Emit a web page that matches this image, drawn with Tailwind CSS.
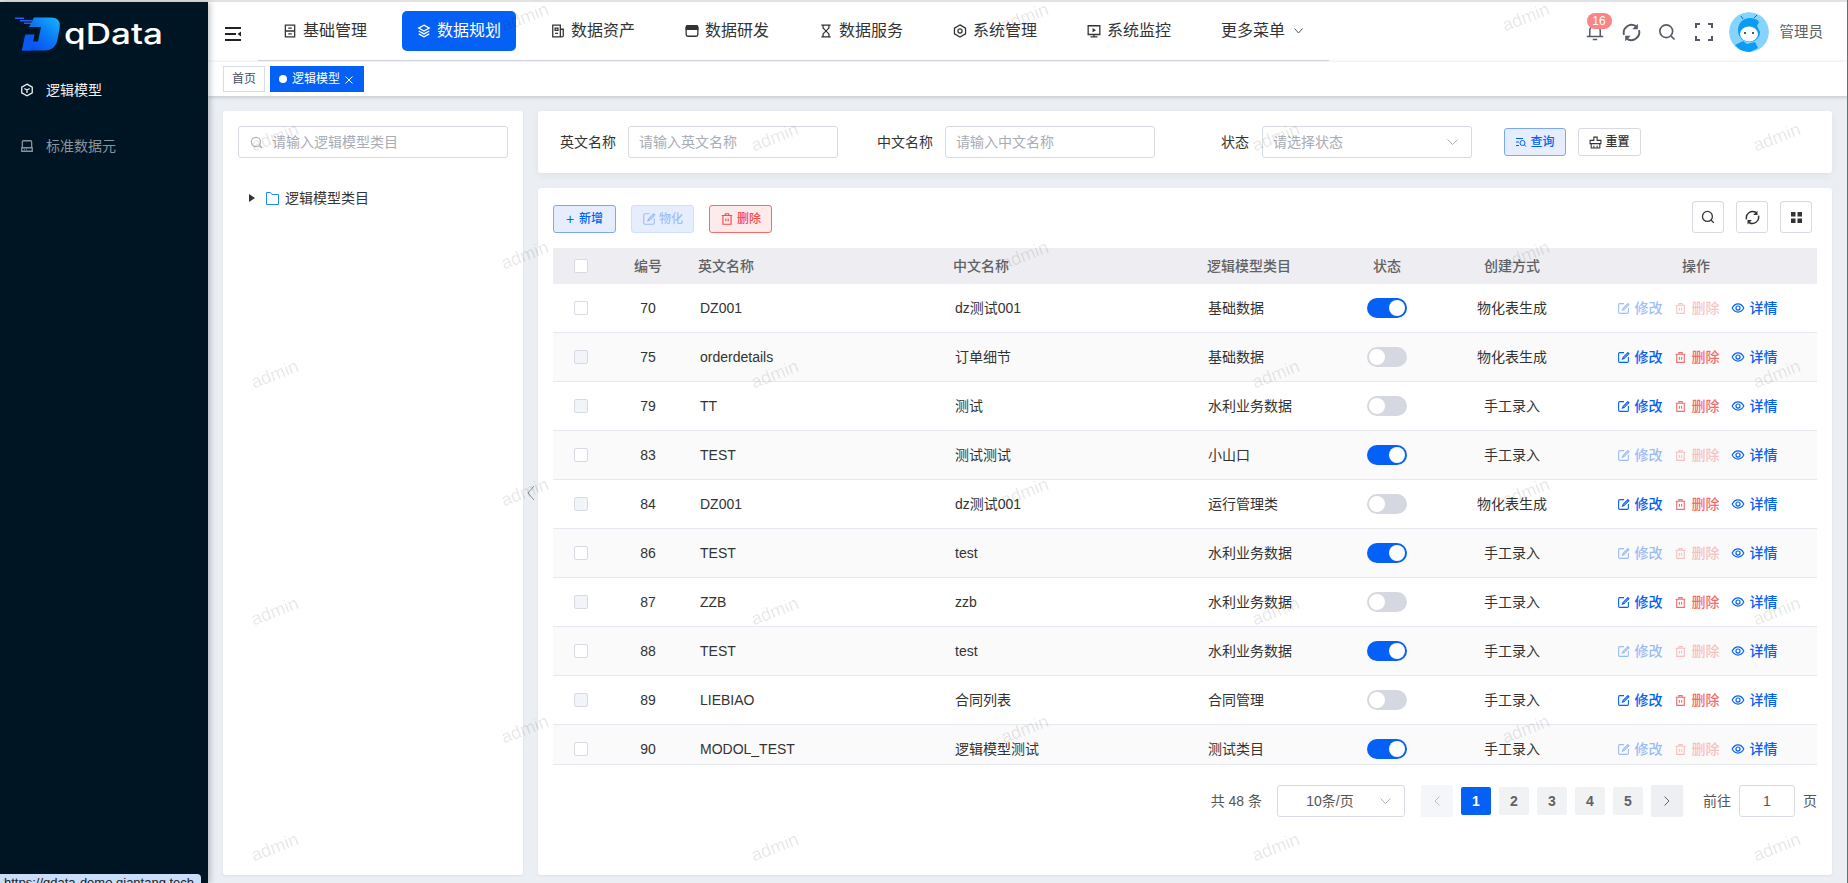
<!DOCTYPE html>
<html lang="zh-CN">

<head>
    <meta charset="UTF-8">
    <title>qData</title>
    <script src="https://cdn.jsdelivr.net/npm/@tailwindcss/browser@4"></script>
</head>

<body class="relative h-[883px] w-[1848px] overflow-hidden bg-[#ebeef2] font-['Liberation_Sans','Noto_Sans_CJK_SC',sans-serif] text-sm text-[#333]">

    <!-- Shared icons -->
    <svg class="hidden" xmlns="http://www.w3.org/2000/svg">
        <symbol id="i-edit" viewBox="0 0 24 24" fill="none" stroke="currentColor" stroke-width="2">
            <path d="M13 3H5a2 2 0 0 0-2 2v14a2 2 0 0 0 2 2h14a2 2 0 0 0 2-2v-8" />
            <path d="M20 3l-9 9-1 3 3-1 9-9z" />
        </symbol>
        <symbol id="i-trash" viewBox="0 0 24 24" fill="none" stroke="currentColor" stroke-width="2">
            <path d="M3 6h18M9 6V3h6v3M5 6v15h14V6M10 11v5M14 11v5" />
        </symbol>
        <symbol id="i-eye" viewBox="0 0 24 24" fill="none" stroke="currentColor" stroke-width="2">
            <path d="M2 12c2.500-4.500 6-7 10-7s7.500 2.500 10 7c-2.500 4.500-6 7-10 7s-7.500-2.500-10-7z" />
            <circle cx="12" cy="12" r="3.500" />
        </symbol>
        <symbol id="i-search" viewBox="0 0 24 24" fill="none" stroke="currentColor" stroke-width="2.200">
            <circle cx="11" cy="11" r="8.500" />
            <path d="M17.500 17.500L22 22" />
        </symbol>
        <symbol id="i-refresh" viewBox="0 0 24 24" fill="none" stroke="currentColor" stroke-width="2.400">
            <path d="M2.500 15a10 10 0 0 1 15-11M21.500 9a10 10 0 0 1-15 11" />
            <path fill="currentColor" stroke="none" d="M20 1v7h-7zM4 23v-7h7z" />
        </symbol>
    </svg>

    <div class="h-[2px] bg-[#e2e2e2]"></div>

    <div class="flex h-[881px]">
        <!-- Sidebar -->
        <aside class="relative z-10 w-[208px] shrink-0 bg-[#001524] shadow-[2px_0_6px_rgba(0,21,41,0.25)]">
            <div class="flex h-[59px] items-start pl-[15px] pt-[15px]">
                <svg class="h-[34px] w-[46px]" viewBox="0 0 46 34" xmlns="http://www.w3.org/2000/svg">
                    <defs>
                        <linearGradient id="logo-d" x1="0" y1="1" x2="1" y2="0">
                            <stop offset="0" stop-color="#0a3ff0" />
                            <stop offset="0.550" stop-color="#0a78f5" />
                            <stop offset="1" stop-color="#17b6ff" />
                        </linearGradient>
                    </defs>
                    <path fill="#2a5cf0" d="M0 0.500h9v1.500H0zM5 3h12v1.500H5zM9 5.500h9v1.500H9z" />
                    <path fill="url(#logo-d)" d="M19 0.500h17c7 0 10 4 8.500 11l-2 11c-1.500 7-5.500 11-13 11H7l3.500-16h9l-1.500 7h5l3-14.500H14z" />
                    <path fill="#0a58f0" d="M10 18.500h9l-3 15H7z" />
                </svg>
                <span class="ml-[3px] mt-[-1px] inline-block origin-left scale-x-[1.21] font-['Inter',sans-serif] text-[29px] font-medium leading-[36px] text-white">qData</span>
            </div>
            <nav>
                <a class="flex h-[58px] items-center gap-[12px] pl-[20px] text-[#f0f2f5]">
                    <svg class="h-[14px] w-[14px]" viewBox="0 0 24 24" fill="none" stroke="currentColor" stroke-width="2.200" xmlns="http://www.w3.org/2000/svg">
                        <path d="M12 2l9 5v10l-9 5-9-5V7zM12 12L7.500 9.500M12 12l4.500-2.500M12 12v5" />
                    </svg>
                    <span>逻辑模型</span>
                </a>
                <a class="flex h-[54px] items-center gap-[12px] pl-[20px] text-[#8a949c]">
                    <svg class="h-[14px] w-[14px]" viewBox="0 0 24 24" fill="none" stroke="currentColor" stroke-width="2.200" xmlns="http://www.w3.org/2000/svg">
                        <path d="M4 15V5a2 2 0 0 1 2-2h12a2 2 0 0 1 2 2v10M3 15h18v6H3zM7 18h1M11 18h1" />
                    </svg>
                    <span>标准数据元</span>
                </a>
            </nav>
        </aside>

        <div class="flex w-[1640px] flex-col">
            <!-- Top menu -->
            <header class="flex h-[60px] shrink-0 bg-white">
                <div class="flex w-[50px] items-center pl-[17px] pt-[4px]">
                    <svg class="h-[14px] w-[16px]" viewBox="0 0 16 14" xmlns="http://www.w3.org/2000/svg">
                        <path fill="#222" d="M0 0h16v2H0zM0 6h11v2H0zM0 12h16v2H0zM16 4.500v5l-3.500-2.500z" />
                    </svg>
                </div>
                <nav class="flex h-[59px] w-[1071px] items-center gap-5 border-b border-[#d8dae3] pl-[10px] text-base">
                    <a class="flex h-10 w-[114px] items-center justify-center gap-[6px]">
                        <svg class="h-[14px] w-[14px]" viewBox="0 0 24 24" fill="none" stroke="currentColor" stroke-width="2.200" xmlns="http://www.w3.org/2000/svg">
                            <path d="M4 2h16v20H4zM4 12h16M9 7h6M9 17h6" />
                        </svg>
                        <span>基础管理</span>
                    </a>
                    <a class="flex h-10 w-[114px] items-center justify-center gap-[6px] rounded-[5px] bg-[#0561f5] text-white">
                        <svg class="h-[14px] w-[14px]" viewBox="0 0 24 24" fill="none" stroke="currentColor" stroke-width="2.200" xmlns="http://www.w3.org/2000/svg">
                            <path d="M12 2l9 5-9 5-9-5zM3 12l9 5 9-5M3 17l9 5 9-5" />
                        </svg>
                        <span>数据规划</span>
                    </a>
                    <a class="flex h-10 w-[114px] items-center justify-center gap-[6px]">
                        <svg class="h-[14px] w-[14px]" viewBox="0 0 24 24" fill="none" stroke="currentColor" stroke-width="2.200" xmlns="http://www.w3.org/2000/svg">
                            <path d="M3 2h13v20H3zM16 9h5v11a2 2 0 0 1-2 2h-3M7 7h5v4H7zM7 16h5" />
                        </svg>
                        <span>数据资产</span>
                    </a>
                    <a class="flex h-10 w-[114px] items-center justify-center gap-[6px]">
                        <svg class="h-[14px] w-[14px]" viewBox="0 0 24 24" fill="none" stroke="currentColor" stroke-width="2.200" xmlns="http://www.w3.org/2000/svg">
                            <rect x="2" y="3" width="20" height="18" rx="3" />
                            <path fill="currentColor" d="M2 6a3 3 0 0 1 3-3h14a3 3 0 0 1 3 3v3H2z" />
                        </svg>
                        <span>数据研发</span>
                    </a>
                    <a class="flex h-10 w-[114px] items-center justify-center gap-[6px]">
                        <svg class="h-[14px] w-[14px]" viewBox="0 0 24 24" fill="none" stroke="currentColor" stroke-width="2.200" xmlns="http://www.w3.org/2000/svg">
                            <path d="M4 2h16M4 22h16M7 2v5l10 10v5M17 2v5L7 17v5" />
                        </svg>
                        <span>数据服务</span>
                    </a>
                    <a class="flex h-10 w-[114px] items-center justify-center gap-[6px]">
                        <svg class="h-[14px] w-[14px]" viewBox="0 0 24 24" fill="none" stroke="currentColor" stroke-width="2.200" xmlns="http://www.w3.org/2000/svg">
                            <path d="M12 1.500l9.500 5.500v10L12 22.500 2.500 17V7z" />
                            <circle cx="12" cy="12" r="3.500" />
                        </svg>
                        <span>系统管理</span>
                    </a>
                    <a class="flex h-10 w-[114px] items-center justify-center gap-[6px]">
                        <svg class="h-[14px] w-[14px]" viewBox="0 0 24 24" fill="none" stroke="currentColor" stroke-width="2.200" xmlns="http://www.w3.org/2000/svg">
                            <path d="M2 3h20v15H2zM12 18v4M6 22h12" />
                            <path fill="currentColor" stroke="none" d="M9.500 7l6 3.500-6 3.500z" />
                        </svg>
                        <span>系统监控</span>
                    </a>
                    <a class="flex h-10 items-center gap-[9px] pl-[15px]">
                        <span>更多菜单</span>
                        <svg class="h-[6px] w-[9px] text-[#555]" viewBox="0 0 9 6" fill="none" stroke="currentColor" xmlns="http://www.w3.org/2000/svg">
                            <path d="M0.500 0.500L4.500 5l4-4.500" />
                        </svg>
                    </a>
                </nav>
                <div class="ml-auto flex items-center pr-[25px] text-[#555b66]">
                    <div class="relative mr-[18px]">
                        <svg class="h-[18px] w-[18px]" viewBox="0 0 24 24" fill="none" stroke="currentColor" stroke-width="2" xmlns="http://www.w3.org/2000/svg">
                            <path d="M5 18V10a7 7 0 0 1 14 0v8M1 18h22M9 22h6" />
                        </svg>
                        <span class="absolute left-[1px] top-[-10px] flex h-4 w-[25px] items-center justify-center rounded-full bg-[#fa8585] text-xs leading-none text-white">16</span>
                    </div>
                    <svg class="mr-[17px] h-[19px] w-[19px]"><use href="#i-refresh" /></svg>
                    <svg class="mr-[19px] h-[18px] w-[18px]"><use href="#i-search" /></svg>
                    <svg class="mr-[16px] h-[18px] w-[18px]" viewBox="0 0 18 18" fill="none" stroke="currentColor" stroke-width="2" xmlns="http://www.w3.org/2000/svg">
                        <path d="M1 5V1h4M13 1h4v4M17 13v4h-4M5 17H1v-4" />
                    </svg>
                    <svg class="h-10 w-10 rounded-full" viewBox="0 0 40 40" xmlns="http://www.w3.org/2000/svg">
                        <circle cx="20" cy="20" r="20" fill="#86d3fd" />
                        <path fill="#0a9cf2" d="M9 18c0-7 5-12 12-12 4 0 7 1 9 4l-2 4 3 6c0 6-5 10-11 10S9 25 9 18z" />
                        <path stroke="#0a6cc0" fill="none" d="M14 7l-2-3M25 6l3-3" />
                        <ellipse cx="20" cy="22" rx="9" ry="7.500" fill="#fff" />
                        <circle cx="16" cy="21" r="1" fill="#123" />
                        <circle cx="24" cy="21" r="1" fill="#123" />
                        <path fill="#0a9cf2" d="M6 33l8-4 4 3 8-2 3 6-8 4c-6 0-11-2-15-7z" />
                    </svg>
                    <span class="ml-[11px] text-[14.500px] text-[#606266]">管理员</span>
                </div>
            </header>

            <!-- Tab bar -->
            <div class="relative flex h-[34px] shrink-0 items-center gap-[5px] bg-white pl-[15px] text-xs shadow-[0_1px_4px_rgba(0,21,41,0.2)]">
                <a class="flex h-[26px] w-[42px] items-center justify-center border border-[#d8dce5] text-[#495060]">首页</a>
                <a class="flex h-[26px] w-[94px] items-center bg-[#0561f5] pl-[9px] text-white">
                    <span class="mr-[5px] h-2 w-2 rounded-full bg-white"></span>
                    <span>逻辑模型</span>
                    <svg class="ml-[5px] mt-[2px] h-2 w-2" viewBox="0 0 8 8" stroke="currentColor" xmlns="http://www.w3.org/2000/svg">
                        <path d="M0.500 0.500l7 7M7.500 0.500l-7 7" />
                    </svg>
                </a>
            </div>

            <!-- Content -->
            <main class="flex min-h-0 flex-1 gap-[15px] pb-[8px] pl-[15px] pr-[16px] pt-[15px]">
                <!-- Category tree -->
                <section class="relative w-[300px] shrink-0 rounded-[3px] bg-white px-[15px] pt-[15px] shadow-[0_1px_3px_rgba(0,0,0,0.06)]">
                    <div class="flex h-8 w-[270px] items-center rounded-[3px] border border-[#d8dae3] pl-[11px]">
                        <svg class="mr-[9px] h-[13px] w-[13px] text-[#b0b4bc]"><use href="#i-search" /></svg>
                        <input class="min-w-0 flex-1 outline-none placeholder:text-[#a8acb4]" placeholder="请输入逻辑模型类目">
                    </div>
                    <div class="mt-[30px] flex h-[20px] items-center pl-[11px]">
                        <span class="mr-[11px] h-0 w-0 border-y-[4.500px] border-l-[6px] border-y-transparent border-l-[#333]"></span>
                        <svg class="mr-[6px] h-[13px] w-[13px] text-[#1a8cff]" viewBox="0 0 13 13" fill="none" stroke="currentColor" xmlns="http://www.w3.org/2000/svg">
                            <path d="M0.500 0.500h4l1.500 2h6.500v10H0.500z" />
                        </svg>
                        <span>逻辑模型类目</span>
                    </div>
                    <svg class="absolute left-[304px] top-[374px] h-4 w-2 text-[#8b8f96]" viewBox="0 0 8 16" fill="none" stroke="currentColor" xmlns="http://www.w3.org/2000/svg">
                        <path d="M7 1L1 8l6 7" />
                    </svg>
                </section>

                <div class="flex min-w-0 flex-1 flex-col gap-[15px]">
                    <!-- Search form -->
                    <section class="flex h-[62px] shrink-0 items-center rounded-[3px] bg-white pl-[22px] shadow-[0_2px_8px_rgba(0,21,41,0.06)]">
                        <label class="mr-[12px]">英文名称</label>
                        <input class="mr-[39px] h-8 w-[210px] rounded-[3px] border border-[#d8dae3] px-[10px] outline-none placeholder:text-[#a8acb4]" placeholder="请输入英文名称">
                        <label class="mr-[12px]">中文名称</label>
                        <input class="mr-[66px] h-8 w-[210px] rounded-[3px] border border-[#d8dae3] px-[10px] outline-none placeholder:text-[#a8acb4]" placeholder="请输入中文名称">
                        <label class="mr-[13px]">状态</label>
                        <div class="mr-[32px] flex h-8 w-[210px] items-center justify-between rounded-[3px] border border-[#d8dae3] pl-[10px] pr-[13px] text-[#a8acb4]">
                            <span>请选择状态</span>
                            <svg class="h-[6px] w-[11px]" viewBox="0 0 11 6" fill="none" stroke="currentColor" xmlns="http://www.w3.org/2000/svg">
                                <path d="M0.500 0.500l5 5 5-5" />
                            </svg>
                        </div>
                        <button class="mr-[12px] flex h-7 w-[62px] items-center justify-center gap-[3px] rounded-[3px] border border-[#7aa8f8] bg-[#e6eefd] text-xs font-medium text-[#0561f5]">
                            <svg class="h-3 w-3" viewBox="0 0 24 24" fill="none" stroke="currentColor" stroke-width="2" xmlns="http://www.w3.org/2000/svg">
                                <path d="M2 5h14M2 12h6M2 19h6" />
                                <circle cx="15" cy="14" r="5" />
                                <path d="M19 18l3 3" />
                            </svg>
                            查询
                        </button>
                        <button class="flex h-7 w-[63px] items-center justify-center gap-[3px] rounded-[3px] border border-[#d8dae3] text-xs font-medium text-[#333]">
                            <svg class="h-[13px] w-[13px]" viewBox="0 0 24 24" fill="none" stroke="currentColor" stroke-width="2" xmlns="http://www.w3.org/2000/svg">
                                <path d="M9 2h6v6h7v6H2V8h7zM4 14v8h16v-8M9 22v-4M15 22v-4" />
                            </svg>
                            重置
                        </button>
                    </section>

                    <!-- Table -->
                    <section class="min-h-0 flex-1 rounded-[3px] bg-white px-[15px] pt-[13px] shadow-[0_1px_3px_rgba(0,0,0,0.06)]">
                        <div class="mb-[15px] flex h-8 items-end justify-between pr-[5px]">
                            <div class="flex gap-[15px] text-xs font-medium">
                                <button class="flex h-7 w-[63px] items-center justify-center gap-[5px] rounded-[3px] border border-[#7aa8f8] bg-[#e6eefd] text-[#0561f5]">
                                    <span class="text-sm leading-none">+</span>
                                    新增
                                </button>
                                <button class="flex h-7 w-[63px] items-center justify-center gap-[3px] rounded-[3px] border border-[#cfe0fb] bg-[#e6eefd] text-[#a0bff8]">
                                    <svg class="h-[14px] w-[14px]"><use href="#i-edit" /></svg>
                                    物化
                                </button>
                                <button class="flex h-7 w-[63px] items-center justify-center gap-[3px] rounded-[3px] border border-[#f56c6c] bg-[#fdeaea] text-[#f54c4c]">
                                    <svg class="h-[14px] w-[14px]"><use href="#i-trash" /></svg>
                                    删除
                                </button>
                            </div>
                            <div class="flex gap-3 text-[#333]">
                                <button class="flex h-8 w-8 items-center justify-center rounded-[3px] border border-[#d8dae3]">
                                    <svg class="h-[14px] w-[14px]"><use href="#i-search" /></svg>
                                </button>
                                <button class="flex h-8 w-8 items-center justify-center rounded-[3px] border border-[#d8dae3]">
                                    <svg class="h-[15px] w-[15px]"><use href="#i-refresh" /></svg>
                                </button>
                                <button class="flex h-8 w-8 items-center justify-center rounded-[3px] border border-[#d8dae3]">
                                    <svg class="h-[11px] w-[11px]" viewBox="0 0 11 11" fill="currentColor" xmlns="http://www.w3.org/2000/svg">
                                        <path d="M0 0h4.500v4.500H0zM6.500 0H11v4.500H6.500zM0 6.500h4.500V11H0zM6.500 6.500H11V11H6.500z" />
                                    </svg>
                                </button>
                            </div>
                        </div>

                        <div class="grid h-9 grid-cols-[54px_82px_255px_254px_127px_124px_126px_242px] items-center bg-[#eeeef2] font-medium text-[#606266]">
                            <span class="ml-[21px] h-[14px] w-[14px] rounded-[2px] border border-[#d8dae3] bg-white"></span>
                            <span class="text-center">编号</span>
                            <span class="pl-[9px]">英文名称</span>
                            <span class="pl-[9px]">中文名称</span>
                            <span class="pl-[9px]">逻辑模型类目</span>
                            <span class="text-center">状态</span>
                            <span class="text-center">创建方式</span>
                            <span class="text-center">操作</span>
                        </div>
                        <div id="table-body" class="h-[481px] overflow-hidden border-b border-[#e6e8f0]"></div>

                        <!-- Pagination -->
                        <div class="mt-[20px] flex h-8 items-center justify-end text-[#555]">
                            <span class="mr-[15px]">共 48 条</span>
                            <div class="relative mr-[16px] flex h-8 w-[128px] items-center justify-center rounded-[3px] border border-[#d8dae3] pr-[22px]">
                                10条/页
                                <svg class="absolute right-[13px] top-[12px] h-[6px] w-[11px] text-[#b0b4bc]" viewBox="0 0 11 6" fill="none" stroke="currentColor" xmlns="http://www.w3.org/2000/svg">
                                    <path d="M0.500 0.500l5 5 5-5" />
                                </svg>
                            </div>
                            <div class="flex items-center gap-2 font-bold">
                                <span class="flex h-8 w-8 items-center justify-center rounded-[2px] bg-[#f4f6f9] text-[#b8bcc4]">
                                    <svg class="h-[10px] w-[6px]" viewBox="0 0 6 10" fill="none" stroke="currentColor" xmlns="http://www.w3.org/2000/svg"><path d="M5.500 0.500L1 5l4.500 4.500" /></svg>
                                </span>
                                <span class="flex h-7 w-[30px] items-center justify-center rounded-[2px] bg-[#0561f5] text-white">1</span>
                                <span class="flex h-7 w-[30px] items-center justify-center rounded-[2px] bg-[#f1f2f4] text-[#606266]">2</span>
                                <span class="flex h-7 w-[30px] items-center justify-center rounded-[2px] bg-[#f1f2f4] text-[#606266]">3</span>
                                <span class="flex h-7 w-[30px] items-center justify-center rounded-[2px] bg-[#f1f2f4] text-[#606266]">4</span>
                                <span class="flex h-7 w-[30px] items-center justify-center rounded-[2px] bg-[#f1f2f4] text-[#606266]">5</span>
                                <span class="flex h-8 w-8 items-center justify-center rounded-[2px] bg-[#edeff2] text-[#606266]">
                                    <svg class="h-[10px] w-[6px]" viewBox="0 0 6 10" fill="none" stroke="currentColor" xmlns="http://www.w3.org/2000/svg"><path d="M0.500 0.500L5 5 0.500 9.500" /></svg>
                                </span>
                            </div>
                            <span class="ml-[20px] mr-[8px]">前往</span>
                            <span class="flex h-8 w-[56px] items-center justify-center rounded-[3px] border border-[#d8dae3]">1</span>
                            <span class="ml-[8px]">页</span>
                        </div>
                    </section>
                </div>
            </main>
        </div>
    </div>

    <!-- Watermarks -->
    <div id="watermarks" class="pointer-events-none absolute inset-0 z-20"></div>

    <!-- Browser link preview -->
    <div class="absolute bottom-0 left-0 z-30 h-[9px] w-[201px] overflow-hidden rounded-tr-[4px] bg-[#c9def8] pl-[4px] pt-[2px] text-[13px] leading-[14px] text-[#222]">https://qdata-demo.qiantang.tech</div>
    <div class="absolute bottom-0 right-0 top-0 z-30 w-px bg-[#5f7272]"></div>

    <script>
        const rows = [
            [70, 'DZ001', 'dz测试001', '基础数据', true, '物化表生成'],
            [75, 'orderdetails', '订单细节', '基础数据', false, '物化表生成'],
            [79, 'TT', '测试', '水利业务数据', false, '手工录入'],
            [83, 'TEST', '测试测试', '小山口', true, '手工录入'],
            [84, 'DZ001', 'dz测试001', '运行管理类', false, '物化表生成'],
            [86, 'TEST', 'test', '水利业务数据', true, '手工录入'],
            [87, 'ZZB', 'zzb', '水利业务数据', false, '手工录入'],
            [88, 'TEST', 'test', '水利业务数据', true, '手工录入'],
            [89, 'LIEBIAO', '合同列表', '合同管理', false, '手工录入'],
            [90, 'MODOL_TEST', '逻辑模型测试', '测试类目', true, '手工录入'],
        ];

        document.getElementById('table-body').innerHTML = rows.map(([id, en, cn, cat, on, how], i) => `
            <div class="grid h-[49px] grid-cols-[54px_82px_255px_254px_127px_124px_126px_242px] items-center border-b border-[#e6e8f0] ${i % 2 ? 'bg-[#fafafa]' : 'bg-white'}">
                <span class="ml-[21px] h-[14px] w-[14px] rounded-[2px] border border-[#d8dae3] ${on ? 'bg-white' : 'bg-[#f1f5f9]'}"></span>
                <span class="text-center">${id}</span>
                <span class="pl-[11px]">${en}</span>
                <span class="pl-[11px]">${cn}</span>
                <span class="pl-[10px]">${cat}</span>
                <span class="flex justify-center">
                    <span class="flex h-5 w-10 items-center rounded-full px-[2px] ${on ? 'justify-end bg-[#0561f5]' : 'justify-start bg-[#d5d8e0]'}">
                        <span class="h-4 w-4 rounded-full bg-white"></span>
                    </span>
                </span>
                <span class="text-center">${how}</span>
                <span class="ml-[2px] flex items-center justify-center gap-[11px] font-medium">
                    <span class="flex items-center gap-[5px] text-[#0561f5] ${on ? 'opacity-40' : ''}"><svg class="h-[13px] w-[13px]"><use href="#i-edit" /></svg>修改</span>
                    <span class="flex items-center gap-[5px] text-[#f56c6c] ${on ? 'opacity-40' : ''}"><svg class="h-[13px] w-[13px]"><use href="#i-trash" /></svg>删除</span>
                    <span class="flex items-center gap-[5px] text-[#0561f5]"><svg class="h-[14px] w-[14px]"><use href="#i-eye" /></svg>详情</span>
                </span>
            </div>`).join('');

        // Staggered "admin" watermark
        const marks = [];
        [275, 525, 775, 1025, 1276, 1526, 1777].forEach((x, col) => {
            const ys = col % 2 ? [18, 256, 493, 730] : [138, 375, 612, 848];
            ys.forEach(y => marks.push([x, y]));
        });
        document.getElementById('watermarks').innerHTML = marks.map(([x, y]) =>
            `<span class="absolute -translate-x-1/2 -translate-y-1/2 -rotate-[21deg] text-[18px] text-black/10" style="left:${x}px;top:${y}px">admin</span>`
        ).join('');
    </script>
</body>

</html>
